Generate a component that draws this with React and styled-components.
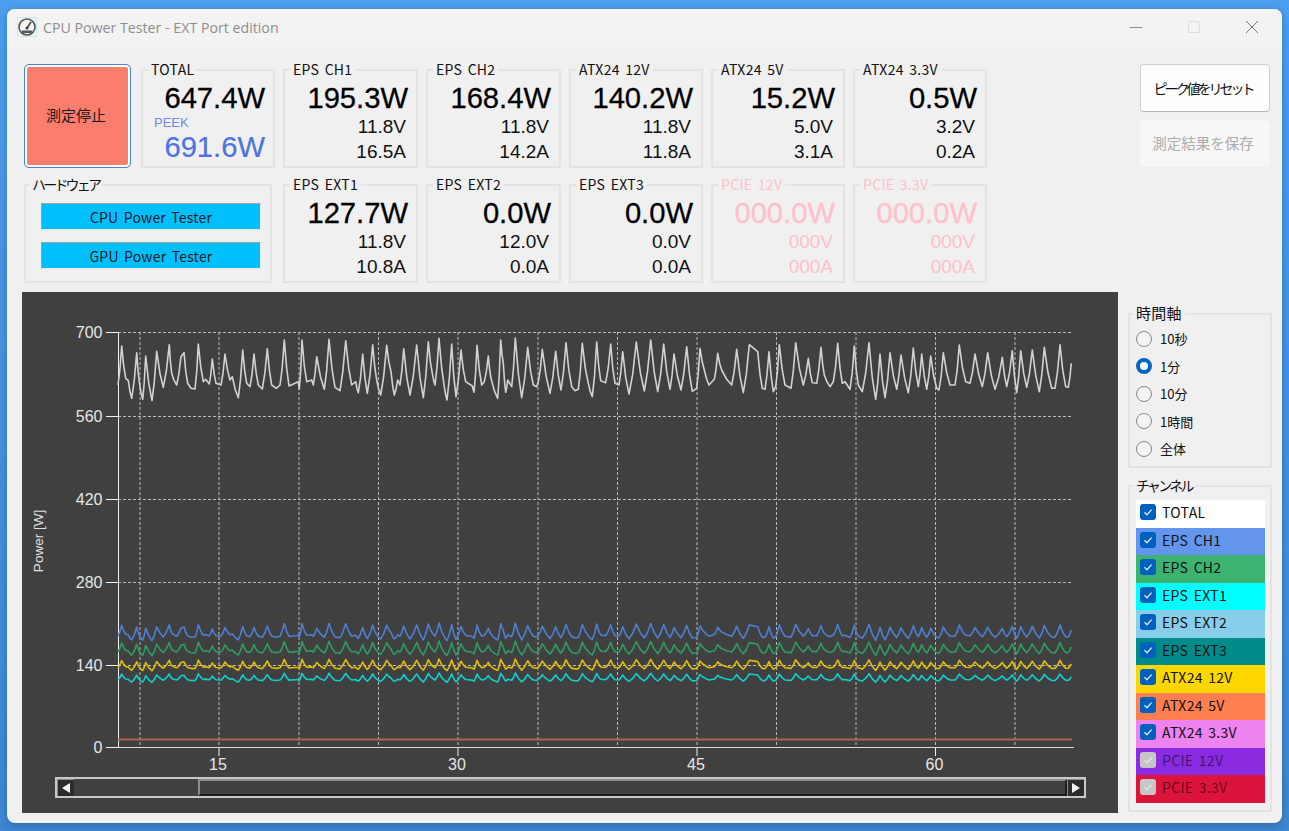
import React from "react";
import styled, { createGlobalStyle } from "styled-components";

const UI_FONT = `"Noto Sans CJK JP", "Liberation Sans", sans-serif`;
const NUM_FONT = `"Liberation Sans", Arial, sans-serif`;

const GlobalStyle = createGlobalStyle`
  html, body {
    margin: 0;
    height: 831px;
    overflow: hidden;
    background: linear-gradient(180deg, #4c9fef 0%, #3f87d3 100%);
  }
`;

const Win = styled.div`
  width: 1275px;
  height: 814px;
  margin: 9px 0 0 7px;
  border-radius: 8px;
  overflow: hidden;
  background: #f0f0f0;
  box-shadow: 0 2px 8px rgba(0, 0, 0, 0.25);
  font-family: ${UI_FONT};
  color: #111;
`;

const TitleBar = styled.div`
  height: 38px;
  box-sizing: border-box;
  display: flex;
  align-items: center;
  padding: 0 0 2px 10px;
  background: #f3f3f3;
  svg {
    flex: none;
  }
`;

const Title = styled.span`
  margin-left: 6px;
  font-family: "Open Sans", sans-serif;
  font-size: 14.2px;
  color: #8e8e8e;
  flex: 1;
`;

const WinControls = styled.div`
  display: flex;
  align-items: center;
  padding-right: 1px;
`;

const WinBtn = styled.div`
  width: 58px;
  height: 36px;
  display: flex;
  align-items: center;
  justify-content: center;
`;

const Content = styled.div`
  padding: 15px 10px 0 15px;
`;

const TopRow = styled.div`
  display: flex;
  padding-left: 2px;
`;

const MetricGrid = styled.div`
  display: grid;
  grid-template-columns: 251px 135px 135px 134px 134px 134px;
  grid-template-rows: 106px 106px;
  column-gap: 8px;
  row-gap: 9px;
`;

const FirstCell = styled.div`
  display: flex;
  gap: 10px;
`;

const Group = styled.fieldset`
  margin: 0;
  padding: 0;
  min-width: 0;
  box-sizing: border-box;
  border: 2px solid #e3e3e3;
  border-radius: 1px;
  width: ${(p) => p.$w || "auto"};
  height: ${(p) => p.$h || "auto"};
  color: ${(p) => (p.$muted ? "#ffc0cb" : "#111")};
`;

const GroupLabel = styled.legend`
  margin-left: ${(p) => p.$inset ?? 5}px;
  padding: 0 3px;
  font-size: ${(p) => p.$size || 14}px;
  line-height: 14px;
  height: 16px;
  white-space: pre;
  word-spacing: 2px;
  letter-spacing: ${(p) => (p.$kana ? "-2.8px" : "0.3px")};
`;

const StopButton = styled.button`
  width: 107px;
  height: 104px;
  margin-top: 2px;
  box-sizing: border-box;
  padding: 0 3px 3px 0;
  border: 1px solid #3f8ad0;
  border-radius: 5px;
  background: #fb7d6c;
  box-shadow: inset 0 0 0 2px #fff;
  font-family: ${UI_FONT};
  font-size: 15px;
  color: #1a1a1a;
`;

const Watts = styled.div`
  margin: 5px 0 1px;
  padding-right: 8px;
  font-family: ${NUM_FONT};
  font-size: 29.2px;
  line-height: 30px;
  text-align: right;
  color: ${(p) => (p.$muted ? "#ffc0cb" : "#000")};
  -webkit-text-stroke: 0.3px currentColor;
`;

const SubValue = styled.div`
  padding-right: 10px;
  font-family: ${NUM_FONT};
  font-size: 19px;
  line-height: 25px;
  text-align: right;
`;

const PeekLabel = styled.div`
  height: 18px;
  padding: 2px 0 0 11px;
  box-sizing: border-box;
  font-family: ${NUM_FONT};
  font-size: 13px;
  line-height: 14px;
  color: #6f8ae6;
`;

const PeekWatts = styled.div`
  padding-right: 8px;
  font-family: ${NUM_FONT};
  font-size: 29.2px;
  line-height: 30px;
  text-align: right;
  color: #4f72e3;
  -webkit-text-stroke: 0.2px currentColor;
`;

const HwButton = styled.div`
  height: 27px;
  box-sizing: border-box;
  display: flex;
  align-items: center;
  justify-content: center;
  background: #00bfff;
  border: 1px solid;
  border-color: #a0a0a0 #e8e8e8 #e8e8e8 #a0a0a0;
  font-size: 14px;
  letter-spacing: 0.2px;
  word-spacing: 2px;
  color: #1a1a1a;
`;

const HwList = styled.div`
  display: flex;
  flex-direction: column;
  gap: 12px;
  padding: 10px 9px 0 15px;
`;

const SideButtons = styled.div`
  margin-left: 153px;
  padding-top: 2px;
  display: flex;
  flex-direction: column;
  gap: 8px;
`;

const SideButton = styled.button`
  width: 130px;
  height: ${(p) => (p.disabled ? "47px" : "48px")};
  padding: ${(p) => (p.disabled ? "0 4px 3px 0" : "0 4px 0 0")};
  box-sizing: border-box;
  border-radius: 4px;
  border: ${(p) => (p.disabled ? "1px solid #f5f5f5" : "1px solid #d0d0d0")};
  border-bottom-color: ${(p) => (p.disabled ? "#f5f5f5" : "#b5b5b5")};
  background: ${(p) => (p.disabled ? "#f7f7f7" : "#fdfdfd")};
  font-family: ${UI_FONT};
  font-size: ${(p) => (p.disabled ? "14.5px" : "14px")};
  letter-spacing: ${(p) => (p.disabled ? "0" : "-3px")};
  color: ${(p) => (p.disabled ? "#acacac" : "#111")};
`;

const BottomRow = styled.div`
  margin-top: 9px;
  display: flex;
  gap: 10px;
`;

const ChartPanel = styled.div`
  width: 1096px;
  height: 521px;
  background: #404040;
  display: flex;
  flex-direction: column;
  flex: none;
  svg {
    display: block;
    flex: none;
  }
`;

const ScrollBar = styled.div`
  margin: 3px 0 0 33px;
  width: 1031px;
  height: 21px;
  box-sizing: border-box;
  border: 2px solid #c8c8c8;
  display: flex;
`;

const ScrollArrow = styled.div`
  width: 17px;
  flex: none;
  background: #2c2c2c;
  border-left: 1px solid #8a8a8a;
  border-top: 1px solid #8a8a8a;
  box-sizing: border-box;
  display: flex;
  align-items: center;
  justify-content: center;
`;

const ScrollThumb = styled.div`
  flex: 1;
  margin-left: 124px;
  background: #404040;
  border-top: 2px solid #8c8c8c;
  border-left: 2px solid #8c8c8c;
  border-bottom: 2px solid #1c1c1c;
  border-right: 2px solid #1c1c1c;
`;

const SideColumn = styled.div`
  width: 144px;
  padding-top: 14px;
  display: flex;
  flex-direction: column;
  gap: 10px;
`;

const RadioList = styled.div`
  display: grid;
  grid-auto-rows: 27.5px;
  padding: 3px 0 0 6px;
`;

const RadioRow = styled.div`
  display: flex;
  align-items: center;
  gap: 8px;
  font-size: 13px;
`;

const RadioDot = styled.span`
  width: 16px;
  height: 16px;
  box-sizing: border-box;
  border-radius: 50%;
  background: ${(p) => (p.$on ? "#fff" : "#f4f4f4")};
  border: ${(p) => (p.$on ? "4px solid #0067c0" : "1.5px solid #858585")};
`;

const ChannelList = styled.div`
  display: grid;
  grid-auto-rows: 27.5px;
  margin: 6px 0 0 6px;
  width: 129px;
`;

const ChannelRow = styled.div`
  display: flex;
  align-items: center;
  gap: 6px;
  padding: 0 0 3px 4px;
  box-sizing: border-box;
  background: ${(p) => p.$bg};
  font-size: 14px;
  letter-spacing: 0.3px;
  word-spacing: 2px;
  color: ${(p) => (p.$off ? "rgba(0, 0, 0, 0.55)" : "#111")};
`;

const CheckBox = styled.span`
  width: 16px;
  height: 16px;
  border-radius: 3px;
  flex: none;
  display: flex;
  align-items: center;
  justify-content: center;
  background: ${(p) => (p.$off ? "#c6c6c6" : "#0060bd")};
`;

// ---- data read off the trace, [x, y] pairs per strip ----
const strips = [
  [115, [9,165,20,48,32,145,40,152,50,205,65,68,73,155,83,208,92,78,111,212,125,64,145,172,163,44,170,130,182,160,185,165,198,80,207,68,218,160,228,175,240,177,250,42,265,155,272,148,283,162,292,87,303,160,318,165,330,72,345,150,352,140,370,203,383,60,395,160,405,170,417,72,430,165,442,177,457,56,470,165,484,175,495,165,508,30,522,168,540,160,550,155,553,178,561,30,575,155,590,150,595,165,605,80,628,178,642,28,660,172,675,182,692,32,710,165,722,155,730,188,743,72,757,190,773,44,785,150,797,195,815,46,828,125,838,195,848,150,855,165,866,56,885,195,905,45,925,203,940,35,952,130]],
  [435, [0,165,12,25,28,170,36,210,50,42,63,200,78,60,92,155,112,168,117,187,126,46,140,165,148,155,160,78,168,145,188,205,197,30,205,100,212,187,218,150,230,170,241,24,260,203,278,52,295,165,305,170,310,155,322,58,345,190,362,64,378,180,393,38,410,170,420,182,430,178,442,40,460,160,472,200,485,36,497,152,512,158,527,42,540,160,552,165,563,65,582,192,604,36,628,183,647,30,668,185,686,42,705,178,717,72,738,180,755,50,772,184,785,175,795,55,808,120,822,165,838,148,848,70,860,120,890,165,905,58,925,188,943,44]],
  [755, [8,65,22,175,30,178,42,65,55,185,62,170,73,44,90,165,100,170,108,175,122,38,145,165,160,85,172,158,185,160,198,52,208,135,225,170,235,155,248,40,262,160,270,155,285,178,298,48,310,165,322,185,342,38,362,208,375,72,390,203,405,68,425,178,438,75,460,188,475,54,490,170,500,72,515,178,527,78,545,175,552,180,565,68,585,165,600,165,613,45,632,155,645,160,660,72,682,170,698,68,720,178,742,82,755,170,772,62,785,188,797,62,815,172,832,60,853,185,868,52,890,175,900,175,915,44,932,170,940,172,949,100]],
];

const readings = strips.flatMap(([x0, d]) => {
  const out = [];
  for (let i = 0; i < d.length; i += 2) {
    out.push([x0 + d[i] / 3, 330 + d[i + 1] / 3]);
  }
  return out;
});

// tall flanks sag towards the low end, so the peaks stay narrow
const trace = readings.flatMap((p, i) => {
  const next = readings[i + 1];
  if (!next || Math.abs(next[1] - p[1]) < 10) return [p];
  const low = Math.max(p[1], next[1]);
  const high = Math.min(p[1], next[1]);
  return [p, [(p[0] + next[0]) / 2, low - (low - high) * 0.38]];
});

const toPoints = (fn) =>
  trace.map(([x, y]) => `${x.toFixed(1)},${fn(y).toFixed(1)}`).join(" ");

const band = (top, span) => (y) => top + ((y - 338) / 64) * span;

const series = [
  { color: "#d2d2d2", fn: (y) => y },
  { color: "#4f7fd2", fn: band(623, 18) },
  { color: "#2f9c62", fn: band(641, 15) },
  { color: "#e3bd05", fn: band(659, 12) },
  { color: "#12cfcf", fn: band(673, 9.5) },
];

const yTicks = [
  [700, 332.5],
  [560, 416.5],
  [420, 499.5],
  [280, 582.5],
  [140, 665.5],
];
const xGrid = [140, 219, 299, 378.5, 458, 538, 617.5, 697, 776.5, 856, 935.5, 1015];
const xLabels = [
  [15, 219],
  [30, 458],
  [45, 697],
  [60, 935.5],
];

const Chart = () => (
  <svg width="1096" height="482" viewBox="22 292 1096 482">
    <g stroke="#b8b8b8" strokeWidth="1" strokeDasharray="3 2" fill="none">
      {yTicks.map(([, y]) => (
        <line key={y} x1="118" x2="1073" y1={y} y2={y} />
      ))}
      {xGrid.map((x) => (
        <line key={x} x1={x} x2={x} y1="332" y2="746" />
      ))}
    </g>
    <g stroke="#f2f2f2" strokeWidth="1" fill="none">
      {yTicks.map(([, y]) => (
        <line key={y} x1="106" x2="118" y1={y} y2={y} />
      ))}
      <line x1="106" x2="118" y1="747.5" y2="747.5" />
      <line x1="118.5" x2="118.5" y1="332" y2="748" />
      <line x1="118" x2="1074" y1="747.5" y2="747.5" stroke="#d8d8d8" />
      {xLabels.map(([, x]) => (
        <line key={x} x1={x} x2={x} y1="748" y2="756" />
      ))}
    </g>
    <line x1="118" x2="1072" y1="739.5" y2="739.5" stroke="#b0664a" strokeWidth="2" />
    {series.map((s) => (
      <polyline
        key={s.color}
        points={toPoints(s.fn)}
        fill="none"
        stroke={s.color}
        strokeWidth="1.6"
        strokeLinejoin="round"
      />
    ))}
    <g fontFamily={NUM_FONT} fontSize="16" fill="#e6e6e6">
      {yTicks.map(([v, y]) => (
        <text key={v} x="102.5" y={y + 5.5} textAnchor="end">
          {v}
        </text>
      ))}
      <text x="102.5" y="753" textAnchor="end">
        0
      </text>
      {xLabels.map(([v, x]) => (
        <text key={v} x={x - 1} y="770" textAnchor="middle">
          {v}
        </text>
      ))}
    </g>
    <text
      transform="translate(43 541) rotate(-90)"
      textAnchor="middle"
      fontFamily={NUM_FONT}
      fontSize="13.5"
      fill="#e0e0e0"
    >
      Power [W]
    </text>
  </svg>
);

const Metric = ({ name, watts, volts, amps, muted }) => (
  <Group $muted={muted}>
    <GroupLabel>{name}</GroupLabel>
    <Watts $muted={muted}>{watts}</Watts>
    <SubValue>{volts}</SubValue>
    <SubValue>{amps}</SubValue>
  </Group>
);

const Check = () => (
  <svg width="12" height="12" viewBox="0 0 12 12" fill="none">
    <path d="M2.5 6.3 5 8.8 9.6 3.6" stroke="#e6e6e6" strokeWidth="1.3" />
  </svg>
);

const AppIcon = () => (
  <svg width="20" height="20" viewBox="0 0 20 20" fill="none">
    <rect x="0.5" y="0.5" width="19" height="19" stroke="#cdeaf2" />
    <circle cx="10" cy="10" r="8" stroke="#555" strokeWidth="1.6" fill="#f4f4f4" />
    <path d="M10 11 14 5" stroke="#444" strokeWidth="1.6" />
    <path d="M4.5 13.5h11l-1 2.5h-9z" fill="#555" />
    <circle cx="10" cy="11" r="1.6" fill="#444" />
  </svg>
);

const radios = ["10秒", "1分", "10分", "1時間", "全体"];

const channels = [
  ["TOTAL", "#ffffff"],
  ["EPS CH1", "#6495ed"],
  ["EPS CH2", "#3cb371"],
  ["EPS EXT1", "#00ffff"],
  ["EPS EXT2", "#87ceeb"],
  ["EPS EXT3", "#008b8b"],
  ["ATX24 12V", "#ffd700"],
  ["ATX24 5V", "#ff7f50"],
  ["ATX24 3.3V", "#ee82ee"],
  ["PCIE 12V", "#8a2be2", true],
  ["PCIE 3.3V", "#dc143c", true],
];

export default function App() {
  return (
    <>
      <GlobalStyle />
      <Win>
        <TitleBar>
          <AppIcon />
          <Title>CPU Power Tester - EXT Port edition</Title>
          <WinControls>
            <WinBtn>
              <svg width="14" height="14" viewBox="0 0 14 14">
                <path d="M1 7.5h12" stroke="#8a8a8a" />
              </svg>
            </WinBtn>
            <WinBtn>
              <svg width="14" height="14" viewBox="0 0 14 14" fill="none">
                <rect x="1.5" y="1.5" width="11" height="11" rx="1" stroke="#dcdcdc" />
              </svg>
            </WinBtn>
            <WinBtn>
              <svg width="14" height="14" viewBox="0 0 14 14">
                <path d="M1 1l12 12M13 1 1 13" stroke="#777" />
              </svg>
            </WinBtn>
          </WinControls>
        </TitleBar>
        <Content>
          <TopRow>
            <MetricGrid>
              <FirstCell>
                <StopButton>測定停止</StopButton>
                <Group $w="134px">
                  <GroupLabel>TOTAL</GroupLabel>
                  <Watts>647.4W</Watts>
                  <PeekLabel>PEEK</PeekLabel>
                  <PeekWatts>691.6W</PeekWatts>
                </Group>
              </FirstCell>
              <Metric name="EPS CH1" watts="195.3W" volts="11.8V" amps="16.5A" />
              <Metric name="EPS CH2" watts="168.4W" volts="11.8V" amps="14.2A" />
              <Metric name="ATX24 12V" watts="140.2W" volts="11.8V" amps="11.8A" />
              <Metric name="ATX24 5V" watts="15.2W" volts="5.0V" amps="3.1A" />
              <Metric name="ATX24 3.3V" watts="0.5W" volts="3.2V" amps="0.2A" />
              <Group $w="248px">
                <GroupLabel $inset={3} $kana>
                  ハードウェア
                </GroupLabel>
                <HwList>
                  <HwButton>CPU Power Tester</HwButton>
                  <HwButton>GPU Power Tester</HwButton>
                </HwList>
              </Group>
              <Metric name="EPS EXT1" watts="127.7W" volts="11.8V" amps="10.8A" />
              <Metric name="EPS EXT2" watts="0.0W" volts="12.0V" amps="0.0A" />
              <Metric name="EPS EXT3" watts="0.0W" volts="0.0V" amps="0.0A" />
              <Metric name="PCIE 12V" watts="000.0W" volts="000V" amps="000A" muted />
              <Metric name="PCIE 3.3V" watts="000.0W" volts="000V" amps="000A" muted />
            </MetricGrid>
            <SideButtons>
              <SideButton>ピーク値をリセット</SideButton>
              <SideButton disabled>測定結果を保存</SideButton>
            </SideButtons>
          </TopRow>
          <BottomRow>
            <ChartPanel>
              <Chart />
              <ScrollBar>
                <ScrollArrow>
                  <svg width="10" height="12" viewBox="0 0 10 12">
                    <path d="M9 1v10L1 6z" fill="#f2f2f2" />
                  </svg>
                </ScrollArrow>
                <ScrollThumb />
                <ScrollArrow>
                  <svg width="10" height="12" viewBox="0 0 10 12">
                    <path d="M1 1v10l8-5z" fill="#f2f2f2" />
                  </svg>
                </ScrollArrow>
              </ScrollBar>
            </ChartPanel>
            <SideColumn>
              <Group $h="162px">
                <GroupLabel $inset={3} $size={15}>
                  時間軸
                </GroupLabel>
                <RadioList>
                  {radios.map((r) => (
                    <RadioRow key={r}>
                      <RadioDot $on={r === "1分"} />
                      {r}
                    </RadioRow>
                  ))}
                </RadioList>
              </Group>
              <Group $h="334px">
                <GroupLabel $inset={3} $kana>
                  チャンネル
                </GroupLabel>
                <ChannelList>
                  {channels.map(([name, bg, off]) => (
                    <ChannelRow key={name} $bg={bg} $off={off}>
                      <CheckBox $off={off}>
                        <Check />
                      </CheckBox>
                      {name}
                    </ChannelRow>
                  ))}
                </ChannelList>
              </Group>
            </SideColumn>
          </BottomRow>
        </Content>
      </Win>
    </>
  );
}
